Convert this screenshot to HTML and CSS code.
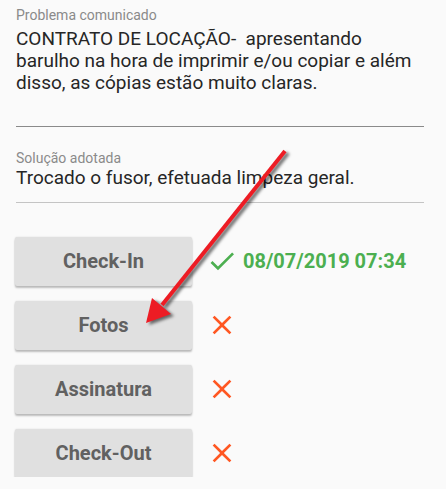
FILE: index.html
```html
<!DOCTYPE html>
<html lang="pt">
<head>
    <meta charset="UTF-8">
    <meta name="viewport" content="width=device-width, initial-scale=1.0">
    <title>Ordem de Serviço</title>
    <link rel="stylesheet" href="styles.css">
</head>
<body>
    <div class="container">
        <div class="field field-problem">
            <div class="field-label">Problema comunicado</div>
            <div class="field-value">CONTRATO DE LOCAÇÃO-&nbsp; apresentando barulho na hora de imprimir e/ou copiar e além disso, as cópias estão muito claras.</div>
        </div>
        <div class="field field-solution">
            <div class="field-label">Solução adotada</div>
            <div class="field-value">Trocado o fusor, efetuada limpeza geral.</div>
        </div>

        <div class="steps">
            <div class="step">
                <button type="button">Check-In</button>
                <svg class="icon icon-ok" viewBox="0 0 24 24"><path d="M9 16.17L4.83 12l-1.42 1.41L9 19 21 7l-1.41-1.41z"/></svg>
                <span class="step-date">08/07/2019 07:34</span>
            </div>
            <div class="step">
                <button type="button">Fotos</button>
                <svg class="icon icon-no" viewBox="0 0 24 24"><path d="M19 6.41L17.59 5 12 10.59 6.41 5 5 6.41 10.59 12 5 17.59 6.41 19 12 13.41 17.59 19 19 17.59 13.41 12z"/></svg>
            </div>
            <div class="step">
                <button type="button">Assinatura</button>
                <svg class="icon icon-no" viewBox="0 0 24 24"><path d="M19 6.41L17.59 5 12 10.59 6.41 5 5 6.41 10.59 12 5 17.59 6.41 19 12 13.41 17.59 19 19 17.59 13.41 12z"/></svg>
            </div>
            <div class="step">
                <button type="button">Check-Out</button>
                <svg class="icon icon-no" viewBox="0 0 24 24"><path d="M19 6.41L17.59 5 12 10.59 6.41 5 5 6.41 10.59 12 5 17.59 6.41 19 12 13.41 17.59 19 19 17.59 13.41 12z"/></svg>
            </div>
        </div>
    </div>

    <!-- seta de anotação por cima da tela -->
    <svg class="annotation" width="446" height="489" viewBox="0 0 446 489">
        <g class="arrow">
            <line x1="285" y1="151" x2="162" y2="305"/>
            <polygon points="146,323 152,298 171,314"/>
        </g>
    </svg>
</body>
</html>
```

FILE: styles.css
```css
body {
    font-family: Roboto, "Noto Sans", sans-serif;
    margin: 0;
    padding: 0;
    background-color: #fafafa;
    color: #212121;
}
.container {
    padding: 7px 22px 0 16px;
}
.field {
    border-bottom: 1px solid #8a8a8a;
}
.field-label {
    font-size: 14px;
    line-height: 17px;
    color: #8a8a8a;
}
.field-value {
    font-size: 19px;
    line-height: 22px;
    color: #262626;
}
.field-problem .field-label {
    margin-bottom: 4px;
}
.field-problem .field-value {
    min-height: 88px;
    padding-bottom: 10px;
}
.field-solution {
    margin-top: 23px;
    border-bottom-color: #c4c4c4;
}
.field-solution .field-value {
    padding-bottom: 13px;
}
.steps {
    margin-top: 34px;
    display: flex;
    flex-direction: column;
    gap: 16px;
}
.step {
    display: flex;
    align-items: center;
    height: 48px;
}
.step button {
    width: 177px;
    height: 49px;
    margin-left: -1px;
    padding: 0;
    border: none;
    border-radius: 2px;
    background-color: #e0e0e0;
    color: #616161;
    font-family: Roboto, sans-serif;
    font-size: 20px;
    font-weight: bold;
    box-shadow: 0 2px 2px rgba(0, 0, 0, 0.24), 0 0 2px rgba(0, 0, 0, 0.12);
    cursor: pointer;
}
.icon {
    width: 32px;
    height: 32px;
    margin-left: 14px;
}
.icon-ok {
    fill: #4caf50;
}
.icon-no {
    fill: #ff5722;
}
.step-date {
    margin-left: 5px;
    font-size: 20px;
    font-weight: bold;
    color: #4caf50;
}
.annotation {
    position: absolute;
    top: 0;
    left: 0;
    pointer-events: none;
}
.arrow {
    filter: drop-shadow(3px 2px 1.5px rgba(0, 0, 0, 0.55));
}
.arrow line {
    stroke: #ed1c24;
    stroke-width: 4;
}
.arrow polygon {
    fill: #ed1c24;
}
```
